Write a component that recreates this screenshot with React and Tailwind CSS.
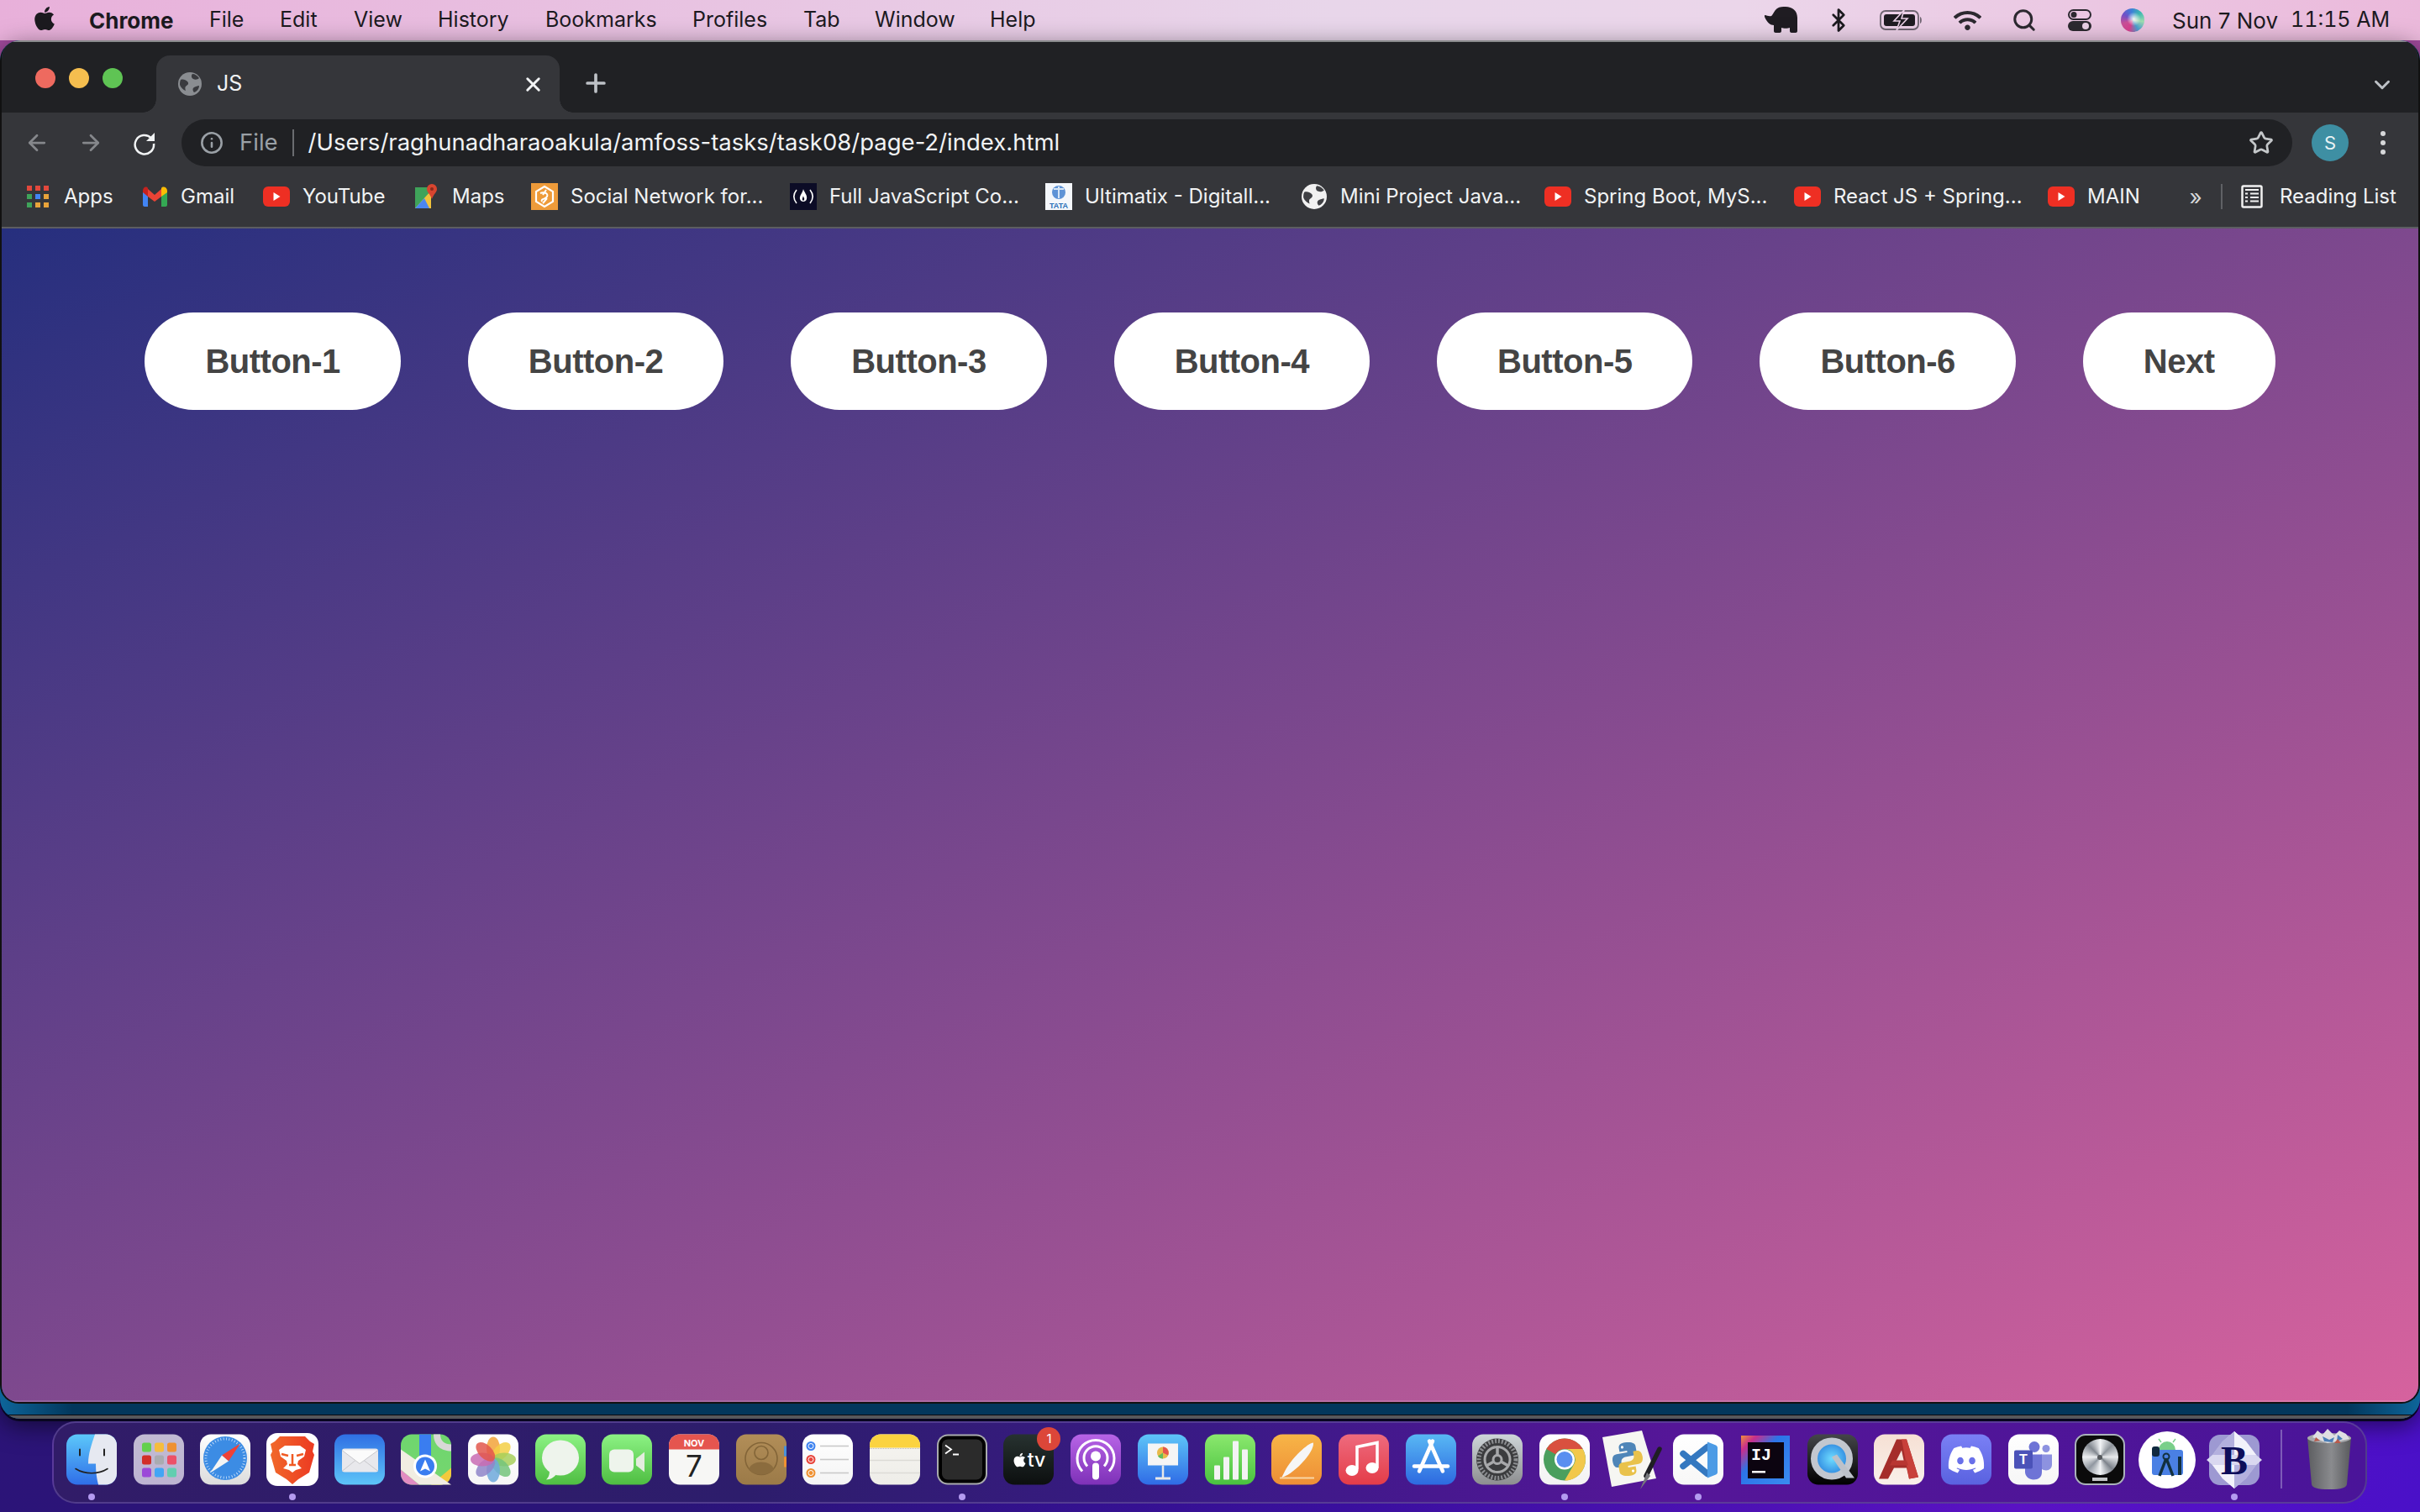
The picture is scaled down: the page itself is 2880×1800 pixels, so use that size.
import React from "react";
import { ArrowLeft, ArrowRight, Info, Star, X, Plus, ChevronDown, Search, Bluetooth } from "lucide-react";
import { FaApple, FaDiscord, FaWifi } from "react-icons/fa";

const Globe = ({ c = "#8a8d91", bg = "#35363a", s = 28 }) => (
  <svg width={s} height={s} viewBox="0 0 28 28">
    <circle cx="14" cy="14" r="14" fill={c} />
    <path d="M3 9c3-1 6 0 8 2s1 4-1 5-2 3-1 6c-3-1-6-4-7-7 0-2 0-4 1-6zM17 2c3 0 6 2 8 5-2 2-5 2-7 1s-3-4-1-6zM25 16c0 4-3 7-6 8-2-2-2-5 0-6s4-2 6-2z" fill={bg} opacity=".95" />
  </svg>
);

const Reload = () => (
  <svg width="30" height="30" viewBox="0 0 30 30" fill="none">
    <path d="M23 9.5A11.2 11.2 0 1 0 26 16" stroke="#f1f3f4" strokeWidth="2.5" />
    <path d="M27 3v10H17z" fill="#f1f3f4" />
  </svg>
);

const YT = () => (
  <svg width="32" height="24" viewBox="0 0 32 24">
    <rect width="32" height="24" rx="6" fill="#ee2f23" />
    <path d="M12.5 7l8 5-8 5z" fill="#fff" />
  </svg>
);

const AppsIcon = () => {
  const c = ["#e2483c", "#e2483c", "#e2483c", "#3fa35a", "#4285f4", "#e8a33a", "#3fa35a", "#e8a33a", "#e8a33a"];
  return (
    <div className="grid grid-cols-3 gap-[4px] w-[26px]">
      {c.map((x, i) => (
        <span key={i} className="w-[6px] h-[6px]" style={{ background: x }} />
      ))}
    </div>
  );
};

const GmailIcon = () => (
  <svg width="30" height="24" viewBox="0 0 30 24">
    <path d="M1 5v17c0 1 1 2 2 2h4V10z" fill="#4285f4" />
    <path d="M23 10v14h5c1 0 2-1 2-2V5z" fill="#34a853" />
    <path d="M7 12V3L15 10l8-7v9l-8 6z" fill="#ea4335" />
    <path d="M1 5c0-4 4-6 6-3v10L1 7z" fill="#c5221f" />
    <path d="M23 2c2-3 7-1 7 3v2l-7 5z" fill="#fbbc04" />
  </svg>
);

const MapsSmall = () => (
  <svg width="28" height="30" viewBox="0 0 28 30">
    <path d="M1 4h19v25H1z" fill="#3fa35a" />
    <path d="M1 29L20 8v21z" fill="#f0c23b" />
    <path d="M1 29l11-12 6 12z" fill="#4a86f0" />
    <path d="M21 0a6 6 0 016 6c0 4-4 6-6 12-2-6-6-8-6-12a6 6 0 016-6z" fill="#d8452f" />
    <circle cx="21" cy="6" r="2" fill="#8a2a1c" />
  </svg>
);

const SocialIcon = () => (
  <svg width="32" height="32" viewBox="0 0 32 32">
    <rect width="32" height="32" fill="#ee9b3a" />
    <path d="M16 4l10 6v12l-10 6-10-6V10z" fill="none" stroke="#fff" strokeWidth="2.2" />
    <path d="M11 12c4-2 10 0 8 4s-8 2-6 6M18 8l-4 6M14 24l5-6" fill="none" stroke="#fff" strokeWidth="2" />
  </svg>
);

const JsIcon = () => (
  <svg width="32" height="32" viewBox="0 0 32 32">
    <rect width="32" height="32" fill="#0c0c26" />
    <path d="M8 8c-4 5-4 11 0 16M24 8c4 5 4 11 0 16" fill="none" stroke="#fff" strokeWidth="1.6" />
    <path d="M16 7c1 4 5 7 4 12-1 4-7 4-8 0-1-4 3-7 4-12z" fill="#fff" />
    <path d="M16 15c0 2 2 3 1 5s-3 0-2-2z" fill="#0c0c26" />
  </svg>
);

const TataIcon = () => (
  <svg width="32" height="32" viewBox="0 0 32 32">
    <rect width="32" height="32" fill="#f4f7fb" />
    <circle cx="16" cy="11" r="8" fill="#5e93d6" />
    <path d="M10 7h12M16 4v14" stroke="#d7e6f6" strokeWidth="2" />
    <text x="16" y="30" textAnchor="middle" fontSize="9" fontWeight="700" fill="#2a6fb8" fontFamily="Liberation Sans">TATA</text>
  </svg>
);

const ReadingIcon = () => (
  <svg width="26" height="28" viewBox="0 0 26 28">
    <rect x="1.5" y="1.5" width="23" height="25" rx="1.5" fill="none" stroke="#f1f1f1" strokeWidth="2.5" />
    <path d="M5 6h16M5 10.5h3M11 10.5h10M5 15h3M11 15h10M5 19.5h3M11 19.5h10" stroke="#f1f1f1" strokeWidth="2" />
  </svg>
);

const bookmarks = [
  { w: "w-[139px]", t: "Apps", i: <AppsIcon /> },
  { w: "w-[145px]", t: "Gmail", i: <GmailIcon /> },
  { w: "w-[178px]", t: "YouTube", i: <YT /> },
  { w: "w-[141px]", t: "Maps", i: <MapsSmall /> },
  { w: "w-[308px]", t: "Social Network for...", i: <SocialIcon /> },
  { w: "w-[304px]", t: "Full JavaScript Co...", i: <JsIcon /> },
  { w: "w-[304px]", t: "Ultimatix - Digitall...", i: <TataIcon /> },
  { w: "w-[290px]", t: "Mini Project Java...", i: <Globe c="#f1f1f1" s={30} /> },
  { w: "w-[297px]", t: "Spring Boot, MyS...", i: <YT /> },
  { w: "w-[302px]", t: "React JS + Spring...", i: <YT /> },
  { w: "w-[161px]", t: "MAIN", i: <YT /> },
];

const menus = [
  { t: "File", w: "w-[84px]" },
  { t: "Edit", w: "w-[88px]" },
  { t: "View", w: "w-[100px]" },
  { t: "History", w: "w-[128px]" },
  { t: "Bookmarks", w: "w-[175px]" },
  { t: "Profiles", w: "w-[132px]" },
  { t: "Tab", w: "w-[85px]" },
  { t: "Window", w: "w-[137px]" },
  { t: "Help", w: "w-[80px]" },
];

const buttons = ["Button-1", "Button-2", "Button-3", "Button-4", "Button-5", "Button-6", "Next"];

const Sq = ({ id, from, to, children, x1 = 0, y1 = 0, x2 = 0, y2 = 1, r = 13 }) => (
  <svg width="60" height="61" viewBox="0 0 60 60" className="overflow-visible">
    <defs>
      <linearGradient id={id} x1={x1} y1={y1} x2={x2} y2={y2}>
        <stop offset="0" stopColor={from} />
        <stop offset="1" stopColor={to} />
      </linearGradient>
    </defs>
    <rect width="60" height="60" rx={r} fill={`url(#${id})`} />
    {children}
  </svg>
);

const Finder = () => (
  <Sq id="fi" from="#5cc8fa" to="#2f6ee8">
    <path d="M34 0h13a13 13 0 0113 13v34a13 13 0 01-13 13H38c-2-8-3-15-3-25h-9c0-12 4-23 8-35z" fill="#e6e9f1" />
    <path d="M16 18v7M45 18v7" stroke="#222" strokeWidth="2" strokeLinecap="round" />
    <path d="M11 41c11 7 27 7 38 0" fill="none" stroke="#222" strokeWidth="1.6" strokeLinecap="round" />
  </Sq>
);

const Launchpad = () => {
  const c = ["#63d04d", "#f5bd3e", "#ef9132", "#d22f28", "#a9abb0", "#ec5068", "#9b49d8", "#42a5f5", "#62ceb0"];
  return (
    <Sq id="la" from="#c2bbd3" to="#bdb4d2">
      {c.map((x, i) => (
        <rect key={i} x={10 + (i % 3) * 15} y={10 + Math.floor(i / 3) * 15} width="11" height="11" rx="2.5" fill={x} />
      ))}
    </Sq>
  );
};

const Safari = () => (
  <Sq id="sa" from="#ffffff" to="#dcdcdc">
    <circle cx="30" cy="28.5" r="26" fill="#3c8ce4" />
    <circle cx="30" cy="28.5" r="23" fill="none" stroke="#cfe4fa" strokeWidth="3" strokeDasharray="0.8 2.6" />
    <path d="M48 11L26 25l8 7z" fill="#ef4136" />
    <path d="M12 46l22-14-8-7z" fill="#f4f4f4" />
  </Sq>
);

const Brave = () => (
  <svg width="62" height="63" viewBox="0 0 62 63">
    <defs>
      <linearGradient id="br" x1="0" y1="0" x2="1" y2="0">
        <stop offset="0" stopColor="#f1682a" />
        <stop offset="1" stopColor="#ec3a22" />
      </linearGradient>
    </defs>
    <rect width="62" height="63" rx="13" fill="#fff" />
    <path d="M16 4h30l6 6 5 3-2 9 2 4-6 21-13 8-7 6-7-6-13-8-6-21 2-4-2-9 5-3z" fill="url(#br)" />
    <path d="M22 15h18l7 5-2 8-7 5-1 4 5 5-7 2-4 3-4-3-7-2 5-5-1-4-7-5-2-8z" fill="#fff" />
    <path d="M31 25v13M26 27l-8-2M36 27l8-2M27 38h8" stroke="#f05a23" strokeWidth="2.5" fill="none" />
  </svg>
);

const Mail = () => (
  <Sq id="ma" from="#2f6fe4" to="#5ec5f8">
    <rect x="9" y="17" width="43" height="28" rx="3" fill="#e8e8ec" />
    <path d="M9 19l21 16 22-16" fill="#fbfbfb" stroke="#c8c8cc" strokeWidth="1" />
    <path d="M9 44l16-13M52 44L35 31" stroke="#c8c8cc" strokeWidth="1" />
  </Sq>
);

const MapsApp = () => (
  <Sq id="mp" from="#6fd66e" to="#75d66f">
    <path d="M0 42l22 18H13A13 13 0 010 47z" fill="#e28cc2" />
    <path d="M36 60l24-20v7a13 13 0 01-13 13z" fill="#f3c93d" />
    <path d="M0 18l60 42H22L0 42z" fill="#f1ede2" />
    <path d="M22 0h14v32H22z" fill="#3a7df0" />
    <path d="M39 0c0 14 10 20 21 20v-8c-8 0-13-4-13-12z" fill="#d8d8d8" />
    <circle cx="29" cy="38" r="14" fill="#fff" />
    <circle cx="29" cy="38" r="11" fill="#3a7df0" />
    <path d="M29 30l6 14-6-3-6 3z" fill="#fff" />
  </Sq>
);

const Photos = () => {
  const c = ["#f2a33a", "#f3cf45", "#a7cf5b", "#74c47b", "#6ea9dc", "#8f86c9", "#c86bb3", "#e2574c"];
  return (
    <Sq id="ph" from="#ffffff" to="#f6f6f6">
      {c.map((x, i) => (
        <ellipse key={i} cx="30" cy="17" rx="8" ry="14" fill={x} opacity=".85" transform={`rotate(${i * 45} 30 30)`} />
      ))}
    </Sq>
  );
};

const Messages = () => (
  <Sq id="me" from="#8cf284" to="#4fbe42">
    <ellipse cx="30" cy="28" rx="22" ry="21" fill="#eef4ec" />
    <path d="M17 44c0 5-2 8-4 10 5 0 9-3 12-6z" fill="#eef4ec" />
  </Sq>
);

const Facetime = () => (
  <Sq id="fa" from="#8cf284" to="#4fbe42">
    <rect x="9" y="18" width="29" height="27" rx="6" fill="#eef4ec" />
    <path d="M41 29l10-8v24l-10-8z" fill="#e4ecde" />
  </Sq>
);

const Calendar = () => (
  <svg width="60" height="61" viewBox="0 0 60 60">
    <rect width="60" height="60" rx="13" fill="#f7f7f5" />
    <path d="M0 18V13A13 13 0 0113 0h34a13 13 0 0113 13v5z" fill="#e5554f" />
    <text x="30" y="14" textAnchor="middle" fontSize="11" fontWeight="700" fill="#fff" fontFamily="Inter">NOV</text>
    <text x="30" y="50" textAnchor="middle" fontSize="35" fill="#222" fontFamily="Inter">7</text>
  </svg>
);

const Contacts = () => (
  <Sq id="co" from="#b28e58" to="#9b7a48" r={12}>
    <rect x="57" y="14" width="3" height="12" fill="#4a90d9" />
    <rect x="57" y="27" width="3" height="12" fill="#ef9132" />
    <circle cx="30" cy="29" r="19" fill="none" stroke="#836538" strokeWidth="1.6" />
    <circle cx="30" cy="22" r="8" fill="none" stroke="#836538" strokeWidth="1.6" />
    <path d="M15 42c3-12 27-12 30 0-8 8-22 8-30 0z" fill="#8b6c3e" />
  </Sq>
);

const Reminders = () => (
  <Sq id="re" from="#ffffff" to="#f4f4f4">
    {[["#3f83f0", 14], ["#e8453c", 30], ["#ef9132", 46]].map(([c, y]) => (
      <g key={y}>
        <circle cx="10" cy={y} r="5.5" fill={c} />
        <circle cx="10" cy={y} r="3" fill="none" stroke="#fff" strokeWidth="1" />
        <rect x="21" y={y - 0.8} width="34" height="1.6" fill="#c9c9c9" />
      </g>
    ))}
  </Sq>
);

const Notes = () => (
  <Sq id="no" from="#f6f5f1" to="#eeede8">
    <path d="M0 16V13A13 13 0 0113 0h34a13 13 0 0113 13v3z" fill="#fbd340" />
    <path d="M0 17h60" stroke="#bbb" strokeWidth="1" strokeDasharray="1 1" />
    <path d="M0 31h60M0 46h60" stroke="#dcdbd6" strokeWidth="1.4" />
  </Sq>
);

const Terminal = () => (
  <svg width="60" height="61" viewBox="0 0 60 60">
    <rect width="60" height="60" rx="13" fill="#a9abad" />
    <rect x="2" y="2" width="56" height="56" rx="11" fill="#000" />
    <rect x="6" y="6" width="48" height="48" rx="7" fill="#2b2b2b" />
    <path d="M10 13l7 5-7 5M19 24h7" fill="none" stroke="#fff" strokeWidth="1.8" />
  </svg>
);

const TV = () => (
  <div className="relative">
    <Sq id="tv" from="#273230" to="#0c0f0f">
      <foreignObject x="0" y="0" width="60" height="60">
        <div className="flex items-center justify-center h-[60px] pt-[1px] text-white">
          <FaApple size={19} />
          <span className="text-[23px] leading-none [font-family:Inter,sans-serif] font-medium">tv</span>
        </div>
      </foreignObject>
    </Sq>
    <span className="absolute -top-[8px] -right-[8px] flex items-center justify-center w-[28px] h-[28px] rounded-full bg-[#dc4639] text-white text-[15px] [font-family:Inter,sans-serif]">1</span>
  </div>
);

const Podcasts = () => (
  <Sq id="po" from="#b764e6" to="#7e31b8">
    <g fill="none" stroke="#fff" strokeWidth="3">
      <path d="M14 44a22 22 0 1132 0" />
      <path d="M20 38a14 14 0 1120 0" />
    </g>
    <circle cx="30" cy="26" r="6" fill="#fff" />
    <rect x="26" y="34" width="8" height="20" rx="4" fill="#fff" />
  </Sq>
);

const Keynote = () => (
  <Sq id="ke" from="#5ec5f8" to="#2f6be6">
    <rect x="12" y="11" width="36" height="26" fill="#f5f5f5" />
    <circle cx="30" cy="22" r="7" fill="#e9b949" />
    <path d="M30 22V15a7 7 0 016 10z" fill="#e5554f" />
    <path d="M30 22l-6 4a7 7 0 006 3z" fill="#61bd5a" />
    <path d="M30 37v15" stroke="#e8e8e8" strokeWidth="2.5" />
    <rect x="21" y="51" width="18" height="3" fill="#e8e8e8" />
  </Sq>
);

const Numbers = () => (
  <Sq id="nu" from="#8be86e" to="#49c23f">
    <rect x="11" y="37" width="7" height="17" rx="1" fill="#f3f3f3" />
    <rect x="22" y="27" width="7" height="27" rx="1" fill="#f3f3f3" />
    <rect x="33" y="8" width="7" height="46" rx="1" fill="#f3f3f3" />
    <rect x="44" y="18" width="7" height="36" rx="1" fill="#f3f3f3" />
  </Sq>
);

const Pages = () => (
  <Sq id="pa" from="#f7b547" to="#ee8e36">
    <path d="M50 10c1 8-12 26-30 38l-8 4 4-8C24 28 44 10 50 10z" fill="#f6f6f6" />
    <rect x="10" y="51" width="41" height="2" fill="#f9d6a4" />
  </Sq>
);

const Music = () => (
  <Sq id="mu" from="#ee6b7e" to="#e43c48">
    <path d="M22 42V15l24-5v30" fill="none" stroke="#fff" strokeWidth="3.5" />
    <ellipse cx="16" cy="43" rx="7.5" ry="6.5" fill="#fff" />
    <ellipse cx="40" cy="40" rx="7.5" ry="6.5" fill="#fff" />
  </Sq>
);

const AppStore = () => (
  <Sq id="ap" from="#58b8f4" to="#2d69e0">
    <path d="M32 8L16 44M28 8l16 36" stroke="#fff" strokeWidth="4.5" strokeLinecap="round" />
    <path d="M10 38h40" stroke="#fff" strokeWidth="4.5" strokeLinecap="round" />
  </Sq>
);

const Settings = () => (
  <Sq id="se" from="#ced6d9" to="#8d8e90">
    <circle cx="30" cy="30" r="25" fill="#3b3c3e" />
    <circle cx="30" cy="30" r="22" fill="none" stroke="#8d8f92" strokeWidth="5" strokeDasharray="2 2" />
    <circle cx="30" cy="30" r="15" fill="none" stroke="#a7a8aa" strokeWidth="3" />
    <circle cx="30" cy="30" r="5" fill="#3b3c3e" stroke="#a7a8aa" strokeWidth="3" />
    <path d="M30 25V15M25.7 32.5l-8.7 5M34.3 32.5l8.7 5" stroke="#a7a8aa" strokeWidth="3.5" />
  </Sq>
);

const ChromeApp = () => (
  <Sq id="ch" from="#ffffff" to="#f2f2f2">
    <circle cx="30" cy="30" r="25" fill="#4a9f5e" />
    <path d="M30 5a25 25 0 0121.6 12.5H30a12.5 12.5 0 00-10.8 6.2L8.4 17.5A25 25 0 0130 5z" fill="#d9503f" />
    <path d="M51.6 17.5A25 25 0 0130 55l10.8-18.7A12.5 12.5 0 0030 17.5z" fill="#f2c84b" />
    <circle cx="30" cy="30" r="12" fill="#fff" />
    <circle cx="30" cy="30" r="9.5" fill="#5a8ff0" />
  </Sq>
);

const snake = "M24 13c-7 0-8 3-8 6v4h9v2H12c-4 0-6 3-6 8s2 8 6 8h4v-5c0-4 3-6 7-6h8c3 0 5-2 5-5v-6c0-3-4-6-12-6z";

const PythonApp = () => (
  <svg width="70" height="70" viewBox="0 0 70 70" className="overflow-visible">
    <path d="M0 8L47 0l17 57-53 10z" fill="#f6f6f2" />
    <g transform="translate(6 1) rotate(-10 24 33) scale(1)">
      <path d={snake} fill="#4f86b8" />
      <path d={snake} fill="#e9c24b" transform="rotate(180 24 33)" />
      <circle cx="20" cy="18" r="1.6" fill="#fff" />
      <circle cx="28" cy="48" r="1.6" fill="#fff" />
    </g>
    <path d="M68 22L52 54" stroke="#1f1f24" strokeWidth="5.5" strokeLinecap="round" />
    <path d="M53 50L45 70l12-16z" fill="#77787c" />
  </svg>
);

const VSCode = () => (
  <Sq id="vs" from="#ffffff" to="#f7f7f7">
    <path d="M41 15L12 38" stroke="#3478c0" strokeWidth="7.5" strokeLinecap="round" />
    <path d="M12 23l29 24" stroke="#3478c0" strokeWidth="7.5" strokeLinecap="round" />
    <path d="M41 9l10 4c1 .5 2 1.500 2 3v29c0 1.500-1 2.500-2 3l-10 4V9z" fill="#4c9be5" />
  </Sq>
);

const Intellij = () => (
  <svg width="58" height="58" viewBox="0 0 58 58">
    <defs>
      <linearGradient id="ij" x1="0" y1="0" x2="1" y2="1">
        <stop offset="0" stopColor="#f2903c" />
        <stop offset=".16" stopColor="#c92e8c" />
        <stop offset=".4" stopColor="#2c74e8" />
        <stop offset="1" stopColor="#3a8cf0" />
      </linearGradient>
    </defs>
    <rect width="58" height="58" fill="url(#ij)" />
    <rect x="8" y="8" width="43" height="43" fill="#0c0410" />
    <text x="12" y="29" fontSize="20" fontWeight="700" fill="#fff" fontFamily="Liberation Mono">IJ</text>
    <rect x="13" y="42" width="16" height="2.500" fill="#fff" />
  </svg>
);

const QuickTime = () => (
  <Sq id="qt" from="#44464a" to="#000000">
    <defs>
      <radialGradient id="qb">
        <stop offset="0" stopColor="#6fdcff" />
        <stop offset="1" stopColor="#2a83de" />
      </radialGradient>
    </defs>
    <circle cx="29" cy="29" r="21" fill="url(#qb)" stroke="#c2c7cf" strokeWidth="8" />
    <path d="M29 27l6-3 21 28h-10z" fill="#bcc1c9" />
  </Sq>
);

const Autocad = () => (
  <Sq id="ac" from="#f6e0d4" to="#f9f0ea">
    <path d="M27 6h12l14 45-11 2-3-13H24l-7 13H6z" fill="#a52d2a" />
    <path d="M33 19l-7 14h10z" fill="#f6e6dc" />
    <path d="M33 6h6l14 45-11 2z" fill="#c8403a" />
    <path d="M22 31h17l2 6H19z" fill="#b83632" />
  </Sq>
);

const Discord = () => (
  <Sq id="di" from="#7a80f5" to="#5a62e0">
    <foreignObject x="0" y="0" width="60" height="60">
      <div className="flex items-center justify-center h-[60px] text-white">
        <FaDiscord size={46} />
      </div>
    </foreignObject>
  </Sq>
);

const Teams = () => (
  <Sq id="te" from="#ffffff" to="#f6f6f6">
    <circle cx="31" cy="15" r="6.5" fill="#6e74d6" />
    <circle cx="45" cy="17" r="4.5" fill="#8d92e0" />
    <path d="M39 24h13v12c0 4-3 7-7 7-2 0-4-1-6-2z" fill="#8d92e0" />
    <path d="M20 24h20v21c0 6-4 9-10 9-5 0-10-4-10-9z" fill="#6e74d6" />
    <rect x="7" y="19" width="22" height="22" rx="2" fill="#4b52b8" />
    <text x="18" y="35" textAnchor="middle" fontSize="16" fontWeight="700" fill="#fff" fontFamily="Liberation Sans">T</text>
  </Sq>
);

const Logic = () => (
  <div className="w-[60px] h-[61px] rounded-[13px] border-[2px] border-[#aab2ba] bg-[#0b0b0b] flex flex-col items-center pt-[4px]">
    <div className="w-[43px] h-[43px] rounded-full flex items-center justify-center bg-[conic-gradient(#f2f4f6,#8f959c,#e6e8ea,#7d838b,#f2f4f6,#9097a0,#eceef0,#828890,#f2f4f6)]">
      <span className="w-[6px] h-[6px] rounded-full bg-[#55585c]" />
    </div>
    <span className="mt-[3px] w-[18px] h-[4px] bg-[#c4c6c8]" />
  </div>
);

const AndroidStudio = () => (
  <svg width="68" height="68" viewBox="0 0 68 68">
    <circle cx="34" cy="34" r="34" fill="#fff" />
    <path d="M24 22a10 10 0 0120 0z" fill="#79cf8a" />
    <path d="M27 13l-3-4M41 13l3-4" stroke="#79cf8a" strokeWidth="1.4" />
    <rect x="16" y="22" width="37" height="30" rx="3" fill="#4a80e4" />
    <rect x="16" y="18" width="9" height="12" rx="3" fill="#10293f" />
    <path d="M33 32L25 53M33 32l8 21" stroke="#12303f" strokeWidth="3.5" />
    <circle cx="33" cy="30" r="3.5" fill="none" stroke="#12303f" strokeWidth="2" />
    <rect x="47" y="30" width="4" height="22" fill="#12303f" />
  </svg>
);

const BBEdit = () => (
  <svg width="66" height="68" viewBox="0 0 66 68">
    <rect x="3" y="4" width="60" height="60" rx="13" fill="#9d99d2" />
    <path d="M33 0l14 12 12 16 7 6-7 6-12 16-14 12-14-12L7 40l-7-6 7-6 12-16z" fill="#d9d8f0" />
    <path d="M33 0l14 12 12 16H33zM33 68L19 56 7 40h26z" fill="#f2f2fa" />
    <path d="M33 0L19 12 7 28h26zM33 68l14-12 12-16H33z" fill="#a6a3d8" opacity=".75" />
    <text x="33" y="51" textAnchor="middle" fontSize="48" fontWeight="700" fill="#0e0e5a" fontFamily="Liberation Serif">B</text>
  </svg>
);

const Trash = () => (
  <svg width="56" height="72" viewBox="0 0 56 72">
    <defs>
      <linearGradient id="tr" x1="0" y1="0" x2="1" y2="0">
        <stop offset="0" stopColor="#5c5d60" />
        <stop offset=".55" stopColor="#8a8b8e" />
        <stop offset="1" stopColor="#58595c" />
      </linearGradient>
    </defs>
    <path d="M2 10h52l-5 56c-1 4-6 6-21 6S8 70 7 66z" fill="url(#tr)" />
    <ellipse cx="28" cy="11" rx="26" ry="6" fill="#a8a9ad" />
    <path d="M8 10L14 2l6 5 6-7 8 8 6-6 8 4 4 6-26 5z" fill="#dfdfe2" />
    <path d="M20 9l8 4 6-3-2 6-10-1zM38 7l6 5-7 3z" fill="#4c7fb8" />
    <path d="M38 12l4 5-8 0zM12 10l5 4-7 1z" fill="#b85a4c" />
  </svg>
);

const dock = [
  { c: <Finder />, dot: true },
  { c: <Launchpad /> },
  { c: <Safari /> },
  { c: <Brave />, dot: true },
  { c: <Mail /> },
  { c: <MapsApp /> },
  { c: <Photos /> },
  { c: <Messages /> },
  { c: <Facetime /> },
  { c: <Calendar /> },
  { c: <Contacts /> },
  { c: <Reminders /> },
  { c: <Notes /> },
  { c: <Terminal />, dot: true },
  { c: <TV /> },
  { c: <Podcasts /> },
  { c: <Keynote /> },
  { c: <Numbers /> },
  { c: <Pages /> },
  { c: <Music /> },
  { c: <AppStore /> },
  { c: <Settings /> },
  { c: <ChromeApp />, dot: true },
  { c: <PythonApp /> },
  { c: <VSCode />, dot: true },
  { c: <Intellij /> },
  { c: <QuickTime /> },
  { c: <Autocad /> },
  { c: <Discord /> },
  { c: <Teams /> },
  { c: <Logic /> },
  { c: <AndroidStudio /> },
  { c: <BBEdit />, dot: true },
];

const Elephant = () => (
  <svg width="39" height="32" viewBox="0 0 39 32" fill="#1f1c22">
    <path d="M0 10c3 0 5 2 8 1 2-1 3-6 7-9 3-2 7-2 10-2 8 0 14 5 14 13v16c0 1-1 2-2 2h-5c-1 0-2-1-2-2v-4c-2 1-8 1-10 0v4c0 1-1 2-2 2h-5c-1 0-2-1-2-2v-7c-4 0-8-3-11-10z" />
  </svg>
);

const Battery = () => (
  <svg width="51" height="24" viewBox="0 0 51 24">
    <rect x="1" y="1" width="45" height="22" rx="6" fill="none" stroke="#6e6470" strokeWidth="1.8" />
    <rect x="5" y="5" width="37" height="14" rx="3" fill="#1f1c22" />
    <path d="M48 8c2.500 1 2.500 7 0 8z" fill="#6e6470" />
    <path d="M29 0L17 13h7l-4 11 13-14h-7z" fill="#1f1c22" stroke="#ead0e6" strokeWidth="1.600" />
  </svg>
);

const ControlCenter = () => (
  <svg width="28" height="26" viewBox="0 0 28 26">
    <rect x="1" y="1" width="26" height="11" rx="5.500" fill="none" stroke="#2c2930" strokeWidth="2" />
    <circle cx="7" cy="6.500" r="3.500" fill="#2c2930" />
    <rect x="0" y="14" width="28" height="12" rx="6" fill="#2c2930" />
    <circle cx="21" cy="20" r="4" fill="#ead0e6" />
  </svg>
);

const Siri = () => (
  <div className="w-[28px] h-[28px] rounded-full bg-[radial-gradient(circle_at_55%_45%,#f5f5f5_0%,transparent_38%),conic-gradient(from_200deg,#d9408f,#c84f98,#7050c8,#3b7fd8,#3bb7b0,#9fdcb0,#4a9fd0,#d9408f)]" />
);

const TabFlare = ({ side }) =>
  side === "l" ? (
    <span className="absolute bottom-0 -left-[16px] w-[16px] h-[16px] bg-[radial-gradient(circle_at_0_0,transparent_15.5px,#35363a_16px)]" />
  ) : (
    <span className="absolute bottom-0 -right-[16px] w-[16px] h-[16px] bg-[radial-gradient(circle_at_100%_0,transparent_15.5px,#35363a_16px)]" />
  );

export default function App() {
  return (
    <div className="relative w-[2880px] h-[1800px] overflow-hidden flex flex-col bg-[linear-gradient(180deg,#a04a9c_0px,#a04a9c_80px,transparent_80px),linear-gradient(100deg,#2c1478_0%,#2a1478_35%,#3a0f9e_60%,#5a12c4_85%,#4a10c8_100%)] [font-family:Inter,'Noto_Sans',sans-serif]">
      {/* Menu bar */}
      <header className="h-[48px] shrink-0 flex items-center bg-[linear-gradient(90deg,#e8b0da_0%,#e8c4e2_30%,#e8d6ea_55%,#ebd6ea_72%,#ebb9db_100%)] text-[#1c1a1f] text-[25px]">
        <FaApple size={32} className="ml-[37px] mb-[4px]" />
        <span className="ml-[37px] w-[143px] font-bold text-[26px]">Chrome</span>
        {menus.map((m) => (
          <span key={m.t} className={m.w}>{m.t}</span>
        ))}
        <div className="ml-auto flex items-center pr-[37px]">
          <Elephant />
          <Bluetooth size={30} strokeWidth={2.2} className="ml-[34px]" />
          <div className="ml-[34px]"><Battery /></div>
          <FaWifi size={33} className="ml-[37px] text-[#2c2930]" />
          <Search size={30} strokeWidth={2.4} className="ml-[36px] text-[#2c2930]" />
          <div className="ml-[37px]"><ControlCenter /></div>
          <div className="ml-[35px]"><Siri /></div>
          <span className="ml-[33px] w-[141px] whitespace-nowrap text-[26px]">Sun 7 Nov</span>
          <span className="w-[117px] whitespace-nowrap text-[25px] tabular-nums">11:15 AM</span>
        </div>
      </header>

      {/* Window behind */}
      <div className="relative z-10 shrink-0 h-[1641px] flex flex-col rounded-[24px] overflow-hidden bg-[linear-gradient(90deg,#0d659a,#02375c_3%,#02375c_97%,#0d659a)] shadow-[0_3px_0_#07051f,0_8px_30px_rgba(0,0,0,0.55)]">
        {/* Main window */}
        <div className="h-[1623px] shrink-0 flex flex-col rounded-[22px] overflow-hidden border-x-[2px] border-b-[2px] border-[#111]">
          <div className="h-[2px] shrink-0 bg-[#8a8b8d]" />
          <div className="h-[2px] shrink-0 bg-[#202124]" />
          {/* Tab strip */}
          <div className="h-[82px] shrink-0 bg-[#202124] flex pl-[40px]">
            <div className="flex gap-[16px] pt-[29px]">
              <span className="w-[24px] h-[24px] rounded-full bg-[#ee6a5f]" />
              <span className="w-[24px] h-[24px] rounded-full bg-[#f5be4f]" />
              <span className="w-[24px] h-[24px] rounded-full bg-[#5fc454]" />
            </div>
            <div className="relative self-end ml-[40px] w-[480px] h-[68px] rounded-t-[16px] bg-[#35363a] flex items-center pl-[26px] pr-[18px]">
              <TabFlare side="l" />
              <TabFlare side="r" />
              <Globe />
              <span className="ml-[18px] text-[25px] text-[#f1f3f4]">JS</span>
              <X size={27} strokeWidth={2.6} className="ml-auto text-[#f1f3f4]" />
            </div>
            <Plus size={34} strokeWidth={2.6} className="ml-[26px] mt-[30px] text-[#bdc1c6]" />
            <ChevronDown size={30} strokeWidth={2.4} className="ml-auto mr-[28px] mt-[34px] text-[#bdc1c6]" />
          </div>

          {/* Toolbar */}
          <div className="h-[72px] shrink-0 bg-[#35363a] flex items-center">
            <div className="pl-[10px] flex">
              <span className="w-[64px] flex justify-center"><ArrowLeft size={30} strokeWidth={2.2} className="text-[#85878b]" /></span>
              <span className="w-[64px] flex justify-center"><ArrowRight size={30} strokeWidth={2.2} className="text-[#85878b]" /></span>
              <span className="w-[64px] flex justify-center"><Reload /></span>
            </div>
            <div className="ml-[12px] flex-1 h-[56px] rounded-full bg-[#202124] flex items-center pl-[22px] pr-[22px]">
              <Info size={28} strokeWidth={2.2} className="text-[#9aa0a6]" />
              <span className="ml-[19px] text-[27.5px] text-[#9aa0a6]">File</span>
              <span className="ml-[17px] w-[2px] h-[32px] bg-[#6a6c70]" />
              <span className="ml-[17px] text-[27.5px] text-[#f1f3f4] whitespace-nowrap">/Users/raghunadharaoakula/amfoss-tasks/task08/page-2/index.html</span>
              <Star size={30} strokeWidth={2.2} className="ml-auto text-[#c4c7c9]" />
            </div>
            <span className="ml-[23px] w-[44px] h-[44px] rounded-full bg-[#3e8fa3] flex items-center justify-center text-[22px] text-[#e8f2f4]">S</span>
            <span className="ml-[38px] mr-[39px] flex flex-col gap-[5px] items-center">
              <i className="w-[6px] h-[6px] rounded-full bg-[#d6d7d9]" />
              <i className="w-[6px] h-[6px] rounded-full bg-[#d6d7d9]" />
              <i className="w-[6px] h-[6px] rounded-full bg-[#d6d7d9]" />
            </span>
          </div>

          {/* Bookmarks */}
          <div className="h-[64px] shrink-0 bg-[#35363a] flex items-center pl-[27px] pb-[8px] text-[24px] text-[#f1f3f4]">
            {bookmarks.map((b, i) => (
              <div key={i} className={`${b.w} shrink-0 flex items-center`}>
                <span className="w-[32px] h-[32px] flex items-center justify-center shrink-0">{b.i}</span>
                <span className="ml-[15px] whitespace-nowrap">{b.t}</span>
              </div>
            ))}
            <span className="w-[30px] text-center text-[26px] text-[#d6d7d9]">»</span>
            <span className="ml-[15px] w-[2px] h-[30px] bg-[#5f6165]" />
            <span className="ml-[22px]"><ReadingIcon /></span>
            <span className="ml-[20px] whitespace-nowrap">Reading List</span>
          </div>
          <div className="h-[2px] shrink-0 bg-[#5c5d61]" />

          {/* Page */}
          <main className="flex-1 bg-[linear-gradient(to_bottom_right,#262f7e,#d6629e)] shadow-[inset_0_-2px_0_rgba(255,255,255,0.14)] flex justify-center items-start gap-[80px] pt-[100px] [font-family:'Liberation_Sans',Arial,sans-serif]">
            {buttons.map((t) => (
              <button key={t} className="h-[116px] px-[72px] rounded-full bg-white text-[40px] font-bold text-[#444] tracking-[-0.5px]">{t}</button>
            ))}
          </main>
        </div>
        <div className="h-[13px] shrink-0" />
        <div className="h-[1px] shrink-0 bg-[#0a0a10]" />
        <div className="h-[4px] shrink-0 overflow-hidden bg-[#56585c] pl-[765px] text-[26px] leading-[30px] tracking-[4px] text-[#1c1c1f]">
          embed
        </div>
      </div>

      {/* Dock */}
      <footer className="relative z-20 ml-[62px] mr-[63px] mt-[3px] h-[98px] shrink-0 flex items-center pl-[5px] rounded-[28px] border-[2px] border-[#5f4a9a]/70 bg-[linear-gradient(90deg,#311c68_0%,#2d1d6c_30%,#3a1a86_50%,#551698_70%,#4a1499_100%)]">
        {dock.map((d, i) => (
          <div key={i} className="relative w-[79.7px] h-[94px] shrink-0 flex items-center justify-center pb-[7px]">
            {d.c}
            {d.dot && <span className="absolute bottom-[2px] w-[8px] h-[8px] rounded-full bg-[#b49bf0]" />}
          </div>
        ))}
        <span className="ml-[15px] w-[2px] h-[70px] bg-[#7d5bb8] mb-[8px]" />
        <div className="ml-[28px] mb-[8px]"><Trash /></div>
      </footer>
    </div>
  );
}
